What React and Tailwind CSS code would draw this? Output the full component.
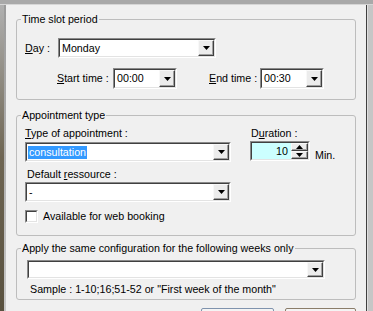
import React from 'react';

function Arrow({ up = false }) {
  return (
    <svg width="7" height="4" viewBox="0 0 7 4" className="block">
      <polygon points={up ? '0,4 7,4 3.5,0' : '0,0 7,0 3.5,4'} fill="#000" />
    </svg>
  );
}

function Raised({ className = '', children }) {
  return (
    <div className={`flex items-center justify-center bg-[#ececec] border border-t-[#f8f8f8] border-l-[#f8f8f8] border-b-[#404040] border-r-[#404040] shadow-[inset_-1px_-1px_0_#a0a0a0] ${className}`}>
      {children}
    </div>
  );
}

function Sunken({ className = '', inner = 'bg-white', children }) {
  return (
    <div className={`flex border border-t-[#8a8a8a] border-l-[#8a8a8a] border-b-white border-r-white ${className}`}>
      <div className={`flex flex-1 min-w-0 border border-t-[#404040] border-l-[#404040] border-b-[#e3e3e3] border-r-[#e3e3e3] ${inner}`}>
        {children}
      </div>
    </div>
  );
}

function Combo({ className, value, selected }) {
  return (
    <Sunken className={className}>
      <div className="flex-1 flex items-center pl-[1px] leading-[13px] overflow-hidden whitespace-nowrap">
        {selected ? (
          <span className="bg-[#3399ff] text-white px-[1px]">{value}</span>
        ) : (
          <span className="px-[1px]">{value}</span>
        )}
      </div>
      <Raised className="w-[16px]">
        <Arrow />
      </Raised>
    </Sunken>
  );
}

function Group({ title, className = '', children }) {
  return (
    <div className={`relative rounded-[3px] border border-[#bdbdbd] ${className}`}>
      <span className="absolute -top-[7px] left-[4px] bg-[#f0f0f0] px-[1px] leading-[13px] whitespace-nowrap">
        {title}
      </span>
      {children}
    </div>
  );
}

export default function App() {
  return (
    <div className="w-[373px] h-[311px] overflow-hidden flex flex-col bg-[#c8c8c8] text-[10.7px] text-black font-['Liberation_Sans',Arial,sans-serif]">
      <div className="h-[5px] shrink-0 bg-[#a9a9a9] border-b border-[#d6d6d6]" />
      <div className="flex flex-1 min-h-0">
        <div className="w-[4px] bg-linear-to-b from-[#b0b0b0] via-[#6e6552] to-[#59513f]" />
        <div className="w-[2px] bg-linear-to-b from-[#9a9a9a] to-[#c8c8c8]" />

        <div className="w-[361px] shrink-0 bg-[#f0f0f0] border-r border-[#404040] pt-[14px] pl-[10px] pr-[10px] flex flex-col">
          <Group title="Time slot period" className="pt-[18px] pb-[10px]">
            <div className="flex items-center pl-[8px]">
              <span className="w-[33px] leading-[13px]"><u>D</u>ay :</span>
              <Combo className="w-[158px] h-[20px]" value="Monday" />
            </div>
            <div className="flex items-center pl-[40px] mt-[10px]">
              <span className="w-[56px] leading-[13px]"><u>S</u>tart time :</span>
              <Combo className="w-[64px] h-[21px]" value="00:00" />
              <span className="ml-[32px] w-[51px] leading-[13px]"><u>E</u>nd time :</span>
              <Combo className="w-[64px] h-[21px]" value="00:30" />
            </div>
          </Group>

          <Group title="Appointment type" className="mt-[15px] pt-[11px] pb-[12px] pl-[8px]">
            <div className="flex">
              <div className="w-[206px] flex flex-col">
                <span className="leading-[13px]"><u>T</u>ype of appointment :</span>
                <Combo className="mt-[2px] h-[20px]" value="consultation" selected />
                <span className="mt-[6px] pl-[2px] leading-[13px]">Default <u>r</u>essource :</span>
                <Combo className="mt-[1px] h-[20px]" value="-" />
              </div>
              <div className="ml-[19px] flex flex-col">
                <span className="pl-[1px] leading-[13px]">D<u>u</u>ration :</span>
                <div className="flex items-end mt-[1px]">
                  <Sunken className="w-[60px] h-[20px]" inner="bg-[#ccffff]">
                    <span className="flex-1 text-right pr-[3px] leading-[16px]">10</span>
                    <div className="w-[17px] flex flex-col">
                      <Raised className="flex-1"><Arrow up /></Raised>
                      <Raised className="flex-1"><Arrow /></Raised>
                    </div>
                  </Sunken>
                  <span className="ml-[5px] leading-[13px] -mb-[1px]">Min.</span>
                </div>
              </div>
            </div>
            <div className="flex items-center mt-[8px]">
              <Sunken className="w-[13px] h-[13px]" />
              <span className="ml-[5px] leading-[13px]">Available for web booking</span>
            </div>
          </Group>

          <Group title="Apply the same configuration for the following weeks only" className="mt-[12px] pt-[11px] pb-[3px] pl-[10px]">
            <Combo className="w-[298px] h-[19px]" value="" />
            <div className="mt-[4px] pl-[3px] leading-[13px]">
              Sample : 1-10;16;51-52 or "First week of the month"
            </div>
          </Group>

          <div className="flex justify-end gap-[11px] mt-[8px]">
            <div className="w-[73px] h-[23px] shrink-0 rounded-[2px] border border-[#7f93ad] bg-[#f4f4f4]" />
            <div className="w-[71px] h-[23px] shrink-0 rounded-[2px] border border-[#8a7d6a] bg-[#f4f4f4]" />
          </div>
        </div>

        <div className="w-[6px] bg-[#c6c6c6] border-l border-[#e0e0e0]" />
      </div>
    </div>
  );
}
